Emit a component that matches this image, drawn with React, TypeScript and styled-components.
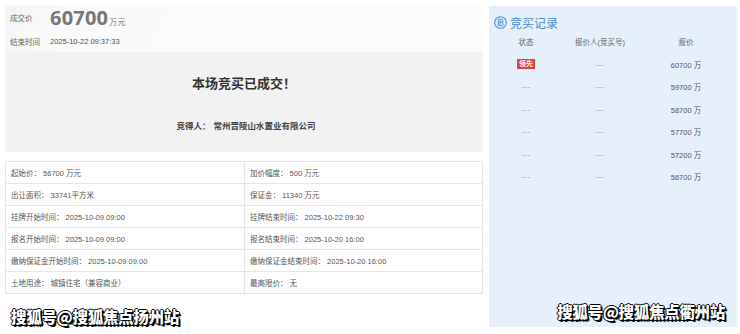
import React from "react"
import styled, { createGlobalStyle } from "styled-components"

const GlobalStyle = createGlobalStyle`
  html, body {
    margin: 0;
    padding: 0;
    background: #fff;
  }
  body {
    font-family: "Liberation Sans", "Noto Sans CJK SC", sans-serif;
    color: #666;
  }
`

const Page = styled.div`
  display: flex;
  flex-direction: row;
  align-items: flex-start;
  gap: 6px;
  padding: 5px 3px 0 5px;
  width: 740px;
  height: 334px;
  box-sizing: border-box;
  overflow: hidden;
`

const LeftColumn = styled.div`
  position: relative;
  display: flex;
  flex-direction: column;
  width: 478px;
  height: 329px;
`

const DealHeader = styled.div`
  display: grid;
  grid-template-columns: 40px 1fr;
  grid-template-rows: 25px 22px;
  align-items: center;
  padding-left: 5px;
  height: 47px;
  box-sizing: border-box;
  background: linear-gradient(
    115deg,
    #f3f3f3 0px,
    #f8f8f8 30px,
    #fbfbfb 200px,
    #fbfbfb 460px,
    #f5f5f5 478px
  );
`

const Label = styled.span`
  font-size: 7.5px;
  color: #666;
`

const Price = styled.span`
  font-family: "Open Sans", "Noto Sans CJK SC", sans-serif;
  font-size: 20px;
  font-weight: 700;
  color: #777;
  line-height: 1;
  letter-spacing: 0.2px;

  small {
    font-size: 8px;
    font-weight: 400;
    margin-left: 1px;
  }
`

const Value = styled.span`
  font-size: 7.5px;
  color: #555;
`

const ResultBox = styled.div`
  display: flex;
  flex-direction: column;
  align-items: center;
  height: 100px;
  background: #f2f2f2;
`

const ResultTitle = styled.div`
  margin-top: 21px;
  font-size: 13px;
  font-weight: 700;
  color: #333;
`

const Winner = styled.div`
  margin-top: 27px;
  font-size: 8.5px;
  font-weight: 700;
  color: #444;
  padding-left: 4px;

  span {
    margin-left: 3px;
  }
`

const InfoTable = styled.div`
  display: grid;
  grid-template-columns: 239px 1fr;
  margin-top: 9px;
  border-top: 1px solid #e6e6e6;
  border-left: 1px solid #e6e6e6;
  width: 478px;
  box-sizing: border-box;
`

const InfoCell = styled.div`
  height: 22px;
  display: flex;
  align-items: center;
  padding-left: 5px;
  font-size: 7.5px;
  color: #555;
  border-right: 1px solid #e6e6e6;
  border-bottom: 1px solid #e6e6e6;
  box-sizing: border-box;
`

const Watermark = styled.div<{ $right?: boolean }>`
  position: absolute;
  bottom: ${({ $right }) => ($right ? "5px" : "7px")};
  ${({ $right }) => ($right ? "right: 12px;" : "left: 6px;")}
  font-family: "Noto Sans CJK SC", sans-serif;
  font-size: 15.5px;
  font-weight: 900;
  color: #fff;
  letter-spacing: -0.3px;
  white-space: nowrap;
  text-shadow: 1px 1px 0 #000, -1px 0 0 #000, 0 -1px 0 #000, 1px 0 0 #000,
    0 1px 0 #000, 2px 2px 0 #000;
`

const RecordPanel = styled.div`
  position: relative;
  margin-top: 1px;
  width: 248px;
  height: 321px;
  background: #e5f0fa;
  box-sizing: border-box;
  padding: 8px 0 0 5px;
`

const RecordHeading = styled.div`
  display: flex;
  align-items: center;
  gap: 3px;
  color: #4a8ccd;
  font-size: 12px;
  height: 16px;
`

const RecordRow = styled.div<{ $head?: boolean }>`
  display: grid;
  grid-template-columns: 64px 84px 88px;
  height: ${({ $head }) => ($head ? "23px" : "22.5px")};
  align-items: center;
  font-size: 7.5px;
  color: #666;
`

const RecordCell = styled.div`
  text-align: center;
`

const BidPrice = styled.span`
  font-size: 7.5px;
  color: #555;
`

const Dash = styled.span`
  color: #999;
  font-size: 8px;
  letter-spacing: 0.3px;
`

const LeadBadge = styled.span`
  display: inline-block;
  background: #d9423f;
  color: #fff;
  font-size: 7px;
  font-weight: 700;
  padding: 0 2px;
  line-height: 10px;
`

const RecordIcon = () => (
  <svg width="13" height="13" viewBox="0 0 13 13">
    <circle cx="6.5" cy="6.5" r="5.8" fill="none" stroke="#4a8ccd" strokeWidth="1.1" />
    <path
      d="M4.3 3.3h3.6l0.9 0.9v5.4H4.3z M5.2 5.2h2.6 M5.2 6.6h2.6 M5.2 8h1.6"
      fill="none"
      stroke="#4a8ccd"
      strokeWidth="0.9"
    />
  </svg>
)

const infoRows: [string, string][] = [
  ["起始价： 56700 万元", "加价幅度： 500 万元"],
  ["出让面积： 33741平方米", "保证金： 11340 万元"],
  ["挂牌开始时间： 2025-10-09 09:00", "挂牌结束时间： 2025-10-22 09:30"],
  ["报名开始时间： 2025-10-09 09:00", "报名结束时间： 2025-10-20 16:00"],
  ["缴纳保证金开始时间： 2025-10-09 09:00", "缴纳保证金结束时间： 2025-10-20 16:00"],
  ["土地用途： 城镇住宅（兼容商业）", "最高限价： 无"],
]

const bids = ["60700", "59700", "58700", "57700", "57200", "56700"]

const App = () => {
  return (
    <>
      <GlobalStyle />
      <Page>
        <LeftColumn>
          <DealHeader>
            <Label>成交价</Label>
            <Price>
              60700<small>万元</small>
            </Price>
            <Label>结束时间</Label>
            <Value>2025-10-22 09:37:33</Value>
          </DealHeader>
          <ResultBox>
            <ResultTitle>本场竞买已成交！</ResultTitle>
            <Winner>
              竞得人：<span>常州晋陵山水置业有限公司</span>
            </Winner>
          </ResultBox>
          <InfoTable>
            {infoRows.map(([a, b]) => (
              <React.Fragment key={a}>
                <InfoCell>{a}</InfoCell>
                <InfoCell>{b}</InfoCell>
              </React.Fragment>
            ))}
          </InfoTable>
          <Watermark>搜狐号@搜狐焦点扬州站</Watermark>
        </LeftColumn>
        <RecordPanel>
          <RecordHeading>
            <RecordIcon />
            竞买记录
          </RecordHeading>
          <RecordRow $head>
            <RecordCell>状态</RecordCell>
            <RecordCell>报价人(竞买号)</RecordCell>
            <RecordCell>报价</RecordCell>
          </RecordRow>
          {bids.map((bid, i) => (
            <RecordRow key={bid}>
              <RecordCell>
                {i === 0 ? <LeadBadge>领先</LeadBadge> : <Dash>---</Dash>}
              </RecordCell>
              <RecordCell>
                <Dash>---</Dash>
              </RecordCell>
              <RecordCell>
                <BidPrice>{bid} 万</BidPrice>
              </RecordCell>
            </RecordRow>
          ))}
          <Watermark $right>搜狐号@搜狐焦点衢州站</Watermark>
        </RecordPanel>
      </Page>
    </>
  )
}

export default App
